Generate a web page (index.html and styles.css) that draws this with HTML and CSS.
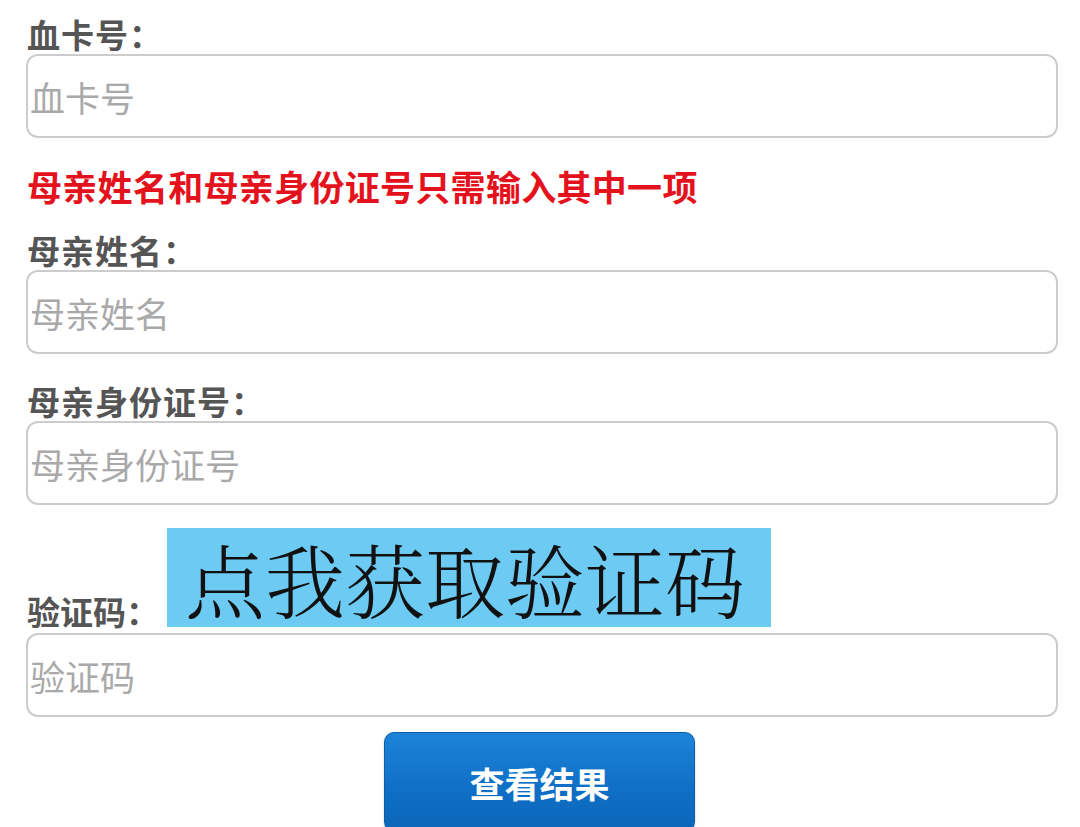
FILE: index.html
```html
<!DOCTYPE html>
<html lang="zh-CN">
<head>
<meta charset="utf-8">
<title>查询</title>
<link rel="stylesheet" href="styles.css">
</head>
<body>
<form class="form">
  <label class="label label-first" for="card">血卡号：</label>
  <input class="input" id="card" type="text" placeholder="血卡号">

  <p class="note">母亲姓名和母亲身份证号只需输入其中一项</p>

  <label class="label" for="name">母亲姓名：</label>
  <input class="input" id="name" type="text" placeholder="母亲姓名">

  <label class="label label-gap" for="idno">母亲身份证号：</label>
  <input class="input" id="idno" type="text" placeholder="母亲身份证号">

  <div class="captcha-row">
    <label class="label captcha-label" for="code">验证码：</label>
    <div class="captcha">点我获取验证码</div>
  </div>
  <input class="input input-code" id="code" type="text" placeholder="验证码">

  <div class="actions">
    <button class="submit" type="button">查看结果</button>
  </div>
</form>
</body>
</html>
```
FILE: styles.css
```css
html, body {
  margin: 0;
  padding: 0;
  background: #ffffff;
  overflow: hidden;
}

body {
  font-family: "Noto Sans CJK SC", "Noto Sans", sans-serif;
}

.form {
  display: flex;
  flex-direction: column;
  padding: 15px 22px 0 26px;
  width: 1080px;
  box-sizing: border-box;
}

.label {
  display: block;
  font-size: 33px;
  line-height: 39px;
  font-weight: bold;
  color: #555555;
  padding-left: 1px;
  letter-spacing: 1px;
}

.label-gap {
  margin-top: 28px;
}

.input {
  display: block;
  box-sizing: border-box;
  width: 100%;
  height: 84px;
  margin: 0;
  border: 2px solid #cccccc;
  border-radius: 12px;
  padding: 0 0 0 2px;
  font-family: "Noto Sans CJK SC", "Noto Sans", sans-serif;
  font-size: 35px;
  color: #333333;
  background: #ffffff;
  outline: none;
}

.input::placeholder {
  color: #a9a9a9;
}

.note {
  margin: 28px 0 25px;
  padding-left: 1px;
  font-size: 35px;
  line-height: 40px;
  font-weight: bold;
  color: #e4121c;
  letter-spacing: 0.3px;
}

.captcha-row {
  display: flex;
  align-items: flex-end;
  margin-top: 23px;
}

.captcha-label {
  width: 140px;
  margin-bottom: -4px;
  letter-spacing: 0;
}

.captcha {
  width: 604px;
  height: 99px;
  box-sizing: border-box;
  background: #6ccaf3;
  padding-left: 18px;
  font-family: "Noto Serif CJK SC", "Noto Sans CJK SC", serif;
  font-size: 80px;
  line-height: 99px;
  font-weight: 300;
  color: #111111;
  white-space: nowrap;
}

.input-code {
  margin-top: 6px;
}

.actions {
  display: flex;
  justify-content: center;
  margin-top: 15px;
  margin-left: -5px;
}

.submit {
  width: 311px;
  height: 100px;
  border: 1px solid #0b5ea8;
  border-radius: 10px;
  background: linear-gradient(#1c84d8, #0f6ec5 60%, #0c66b8);
  color: #ffffff;
  font-family: "Noto Sans CJK SC", "Noto Sans", sans-serif;
  font-size: 35px;
  font-weight: bold;
  line-height: 1;
  box-shadow: 0 1px 2px rgba(0, 0, 0, 0.25);
}
```
